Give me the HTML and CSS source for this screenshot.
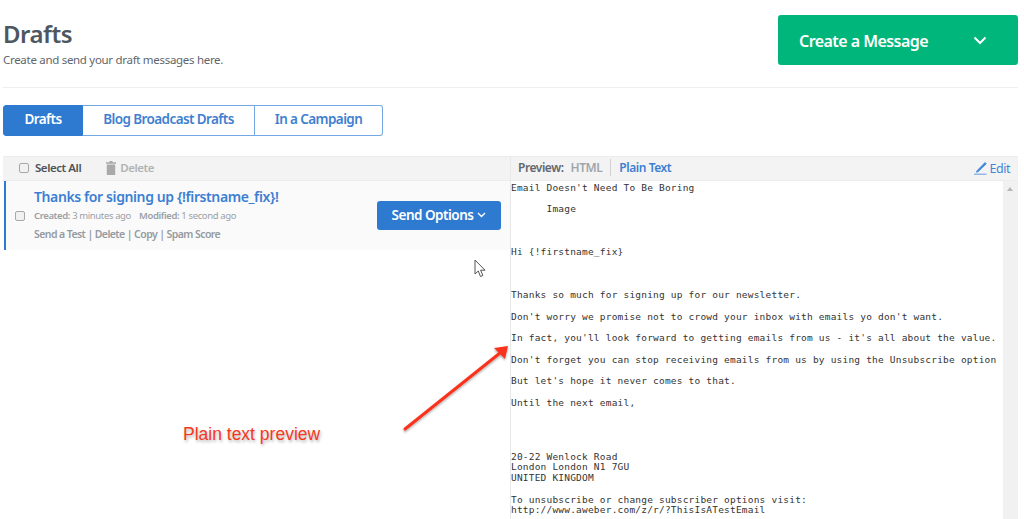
FILE: index.html
```html
<!DOCTYPE html>
<html lang="en">
<head>
<meta charset="utf-8">
<title>Drafts</title>
<link rel="stylesheet" href="styles.css">
</head>
<body>
<div class="page">
  <header class="head">
    <div class="head-text">
      <h1 class="title">Drafts</h1>
      <p class="subtitle">Create and send your draft messages here.</p>
    </div>
    <button class="create">
      <span class="create-label">Create a Message</span>
      <svg class="create-chev" width="14" height="9" viewBox="0 0 14 9"><path d="M1.5 1.5 7 7l5.500-5.500" fill="none" stroke="#fff" stroke-width="2"/></svg>
    </button>
  </header>
  <nav class="tabs">
    <a class="tab tab-active">Drafts</a>
    <a class="tab tab-blog">Blog Broadcast Drafts</a>
    <a class="tab tab-camp">In a Campaign</a>
  </nav>
  <section class="panel">
    <div class="list">
      <div class="bar bar-left">
        <span class="check"></span>
        <span class="select-all">Select All</span>
        <svg class="trash" width="10" height="14" viewBox="0 0 10 14"><path d="M3.500 0h3v1.200H10v1.600H0V1.200h3.500zM.8 3.600h8.400V14H.8z" fill="#a9a9a9"/></svg>
        <span class="delete">Delete</span>
      </div>
      <article class="row">
        <span class="check"></span>
        <div class="row-body">
          <a class="row-title">Thanks for signing up {!firstname_fix}!</a>
          <div class="meta"><b>Created:</b> 3 minutes ago <b class="mod">Modified:</b> 1 second ago</div>
          <div class="links">Send a Test | Delete | Copy | Spam Score</div>
        </div>
        <button class="send">Send Options
          <svg width="9" height="6" viewBox="0 0 9 6"><path d="M1 1l3.500 3.500L8 1" fill="none" stroke="#fff" stroke-width="1.400"/></svg>
        </button>
      </article>
    </div>
    <div class="preview">
      <div class="bar bar-right">
        <span class="p-label">Preview:</span>
        <span class="p-html">HTML</span>
        <span class="p-plain">Plain Text</span>
        <span class="edit">
          <svg width="13" height="13" viewBox="0 0 13 13"><path d="M11 .5 12.300 1.800 4 9.800 2.500 10.300 3 8.800zM0 12.200h12.500" fill="#3f87d9" stroke="#3f87d9" stroke-width=".8"/></svg>
          Edit
        </span>
      </div>
      <div class="pane">
<pre class="mail">Email Doesn't Need To Be Boring

      Image



Hi {!firstname_fix}



Thanks so much for signing up for our newsletter.

Don't worry we promise not to crowd your inbox with emails yo don't want.

In fact, you'll look forward to getting emails from us - it's all about the value.

Don't forget you can stop receiving emails from us by using the Unsubscribe option

But let's hope it never comes to that.

Until the next email,




20-22 Wenlock Road
London London N1 7GU
UNITED KINGDOM

To unsubscribe or change subscriber options visit:
http://www.aweber.com/z/r/?ThisIsATestEmail</pre>
        <div class="scroll"><span class="scroll-up"></span></div>
      </div>
    </div>
  </section>
</div>
<svg class="cursor" width="14" height="20" viewBox="0 0 14 20"><path d="M1 1v14l3.300-3 2.200 5.500 2.400-1-2.300-5.300H11z" fill="#fff" stroke="#555" stroke-width="1"/></svg>
<svg class="arrow" width="120" height="100" viewBox="0 0 120 100"><defs><filter id="sh" x="-20%" y="-20%" width="140%" height="140%"><feDropShadow dx="0" dy="1.500" stdDeviation="1.200" flood-color="#000" flood-opacity=".35"/></filter></defs><g filter="url(#sh)"><path d="M5 87 100 11" stroke="#f8331a" stroke-width="3" stroke-linecap="round" fill="none"/><path d="M108 4 105 17 94 6z" fill="#f8331a"/></g></svg>
<div class="note">Plain text preview</div>
</body>
</html>
```
FILE: styles.css
```css
* { box-sizing: border-box; }
html, body { margin: 0; height: 519px; overflow: hidden; background: #fff; }
body { font-family: "Noto Sans", "Open Sans", sans-serif; color: #4b5660; position: relative; }
.page { margin-left: 3px; width: 1015px; }

.head { display: flex; justify-content: space-between; height: 88px; padding-top: 15px; border-bottom: 1px solid #eeeeee; }
.title { margin: 4px 0 0; font-size: 24px; line-height: 30px; font-weight: 600; color: #4d5761; letter-spacing: -.5px; }
.subtitle { margin: 2px 0 0; font-size: 11.500px; line-height: 17px; color: #5f666c; letter-spacing: -.3px; }
.create { width: 240px; height: 50px; border: 0; border-radius: 3px; background: #00b67a; color: #fff; display: flex; align-items: center; justify-content: space-between; padding: 0 31px 0 21px; font: 600 16px "Noto Sans", sans-serif; letter-spacing: -.55px; }
.create-label { margin-top: 2px; }

.tabs { display: flex; margin-top: 17px; height: 31px; width: 380px; }
.tab { display: flex; align-items: center; justify-content: center; padding-bottom: 3px; font-size: 13.500px; font-weight: 600; color: #3f7fd0; border: 1px solid #74a8e4; border-left: 0; letter-spacing: -.6px; }
.tab-active { width: 80px; background: #2e7ad1; color: #fff; border: 1px solid #2e7ad1; border-radius: 3px 0 0 3px; }
.tab-blog { width: 172px; }
.tab-camp { width: 128px; border-radius: 0 3px 3px 0; }

.panel { display: flex; margin-top: 20px; }
.list { width: 507px; flex: none; }
.preview { flex: 1; min-width: 0; border-left: 1px solid #e8e8e8; }
.bar { height: 25px; background: #f3f3f3; border-top: 1px solid #ececec; border-bottom: 1px solid #ececec; display: flex; align-items: center; padding-bottom: 2px; font-size: 11.500px; font-weight: 600; letter-spacing: -.45px; }
.bar-left { padding-left: 16px; }
.check { width: 10px; height: 10px; border: 1px solid #a8a8a8; border-radius: 2px; background: #f1f1f1; flex: none; }
.select-all { margin-left: 6px; color: #4f5358; }
.trash { margin-left: 25px; }
.delete { margin-left: 4px; color: #b2b2b2; }

.row { height: 69px; margin-left: 1px; background: #fafafa; border-left: 2px solid #2e7ad1; display: flex; align-items: center; padding: 0 9px 0 9px; }
.row-body { margin-left: 9px; flex: 1; margin-top: -4px; }
.row-title { display: block; font-size: 14px; line-height: 20px; font-weight: 600; color: #3c7fd3; letter-spacing: -.39px; }
.meta { font-size: 9.500px; line-height: 14px; margin-top: 2px; color: #9aa0a6; letter-spacing: -.38px; white-space: pre-wrap; }
.meta b { font-weight: 600; }
.mod { margin-left: 6px; }
.links { font-size: 10.500px; line-height: 14px; margin-top: 4px; font-weight: 600; color: #959ba1; letter-spacing: -.58px; }
.send { width: 124px; height: 29px; border: 0; border-radius: 3px; background: #2e7ad1; color: #fff; font: 600 13.500px "Noto Sans", sans-serif; letter-spacing: -.5px; display: flex; align-items: center; justify-content: center; gap: 4px; padding-bottom: 2px; }

.bar-right { padding-left: 7px; padding-right: 8px; }
.p-label { color: #62686e; font-size: 12px; }
.p-html { margin-left: 7px; color: #a0a6ab; font-size: 12px; padding-right: 8px; border-right: 1px solid #d2d2d2; line-height: 17px; }
.p-plain { margin-left: 8px; color: #3c7fd3; font-size: 12px; }
.edit { margin-left: auto; margin-top: 2px; color: #3f87d9; font-size: 12.500px; font-weight: 400; display: flex; align-items: center; gap: 2px; }

.pane { display: flex; height: 338px; }
.mail { flex: 1; margin: 0; padding: 1.500px 0 0 0; font-family: "DejaVu Sans Mono", "Liberation Mono", monospace; font-size: 9.500px; letter-spacing: .2px; line-height: 10.770px; color: #333; overflow: hidden; }
.scroll { width: 15px; background: #f1f1f1; flex: none; padding: 6px 0 0 4px; }
.scroll-up { display: block; width: 0; height: 0; border: 3.500px solid transparent; border-top: 0; border-bottom: 4px solid #b5b5b5; }

.cursor { position: absolute; left: 474px; top: 259px; }
.arrow { position: absolute; left: 400px; top: 342px; }
.note { position: absolute; left: 183px; top: 424px; font-family: "Liberation Sans", sans-serif; font-size: 17.500px; line-height: 20px; color: #f5391f; text-shadow: 1px 2px 3px rgba(0,0,0,.3); }
```
